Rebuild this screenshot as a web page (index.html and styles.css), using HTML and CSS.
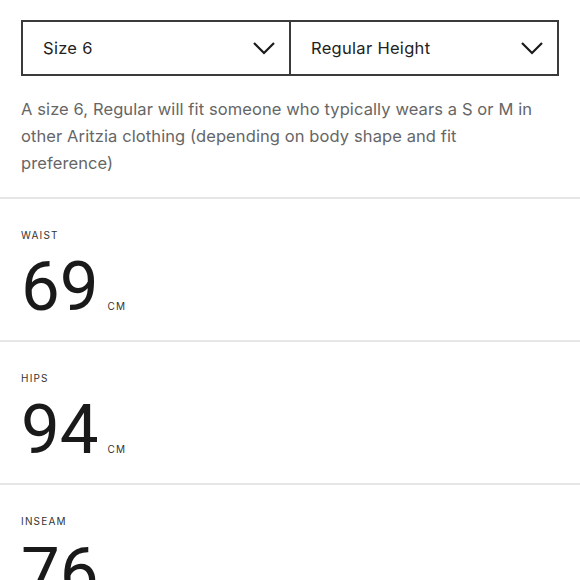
FILE: index.html
```html
<!DOCTYPE html>
<html>
<head>
<meta charset="utf-8">
<link rel="stylesheet" href="styles.css">
</head>
<body>
<div class="top">
  <div class="selects">
    <div class="select">
      <span>Size 6</span>
      <svg class="chev" width="22" height="13" viewBox="0 0 22 13"><path d="M1 1 L11 11 L21 1" fill="none" stroke="#1a1a1a" stroke-width="2.2"/></svg>
    </div>
    <div class="select">
      <span>Regular Height</span>
      <svg class="chev" width="22" height="13" viewBox="0 0 22 13"><path d="M1 1 L11 11 L21 1" fill="none" stroke="#1a1a1a" stroke-width="2.2"/></svg>
    </div>
  </div>
  <p class="desc">A size 6, Regular will fit someone who typically wears a S or M in other Aritzia clothing (depending on body shape and fit preference)</p>
</div>
<div class="measure">
  <div class="label">WAIST</div>
  <div class="value"><span class="num">69</span><span class="unit">CM</span></div>
</div>
<div class="measure">
  <div class="label">HIPS</div>
  <div class="value"><span class="num">94</span><span class="unit">CM</span></div>
</div>
<div class="measure">
  <div class="label">INSEAM</div>
  <div class="value"><span class="num">76</span><span class="unit">CM</span></div>
</div>
</body>
</html>
```
FILE: styles.css
```css
html, body {
  margin: 0;
  padding: 0;
  background: #fff;
  font-family: "Inter", "Lato", sans-serif;
  color: #1a1a1a;
}
.top {
  padding: 20px 21px 0 21px;
  border-bottom: 2px solid #e6e6e6;
}
.selects {
  display: flex;
  border: 2px solid #3a3a3a;
  height: 52px;
  width: 534px;
}
.select {
  flex: 1;
  display: flex;
  align-items: center;
  justify-content: space-between;
  padding: 0 14px 0 20px;
}
.select:first-child {
  border-right: 2px solid #3a3a3a;
  padding-right: 14px;
}
.select span {
  font-size: 16.5px;
  letter-spacing: 0.3px;
  color: #222;
}
.chev {
  display: block;
  margin-top: 1px;
}
.desc {
  margin: 20px 0 0 0;
  padding-bottom: 20px;
  max-width: 520px;
  font-size: 16.5px;
  letter-spacing: 0.1px;
  line-height: 27px;
  color: #666;
}
.measure {
  padding: 29px 21px 0 21px;
  height: 112px;
  border-bottom: 2px solid #e6e6e6;
}
.label {
  font-size: 10px;
  letter-spacing: 1.2px;
  color: #333;
  line-height: 14px;
}
.value {
  display: flex;
  align-items: baseline;
  margin-top: 9px;
}
.num {
  font-family: "Roboto", "Inter", sans-serif;
  font-size: 69px;
  line-height: 72px;
  font-weight: 400;
  color: #1a1a1a;
}
.unit {
  font-size: 10px;
  letter-spacing: 1.2px;
  margin-left: 9px;
  color: #333;
}
```
